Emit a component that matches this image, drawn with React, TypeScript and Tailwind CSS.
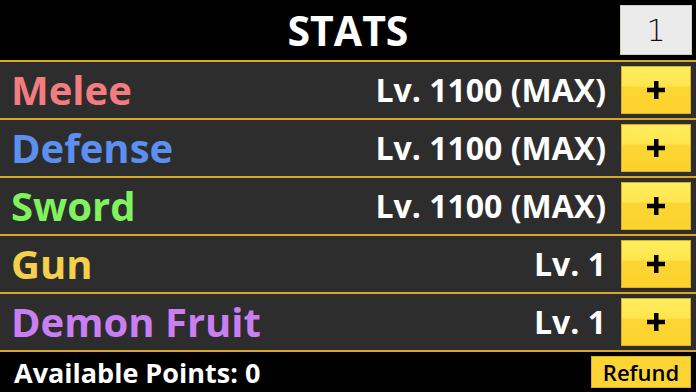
const stats = [
  { name: 'Melee', color: 'text-[#f27c80]', level: 'Lv. 1100 (MAX)' },
  { name: 'Defense', color: 'text-[#5c8ff0]', level: 'Lv. 1100 (MAX)' },
  { name: 'Sword', color: 'text-[#80f25e]', level: 'Lv. 1100 (MAX)' },
  { name: 'Gun', color: 'text-[#f4d04c]', level: 'Lv. 1' },
  { name: 'Demon Fruit', color: 'text-[#c97ff2]', level: 'Lv. 1' },
]

const PlusButton = () => (
  <button className="flex h-[48px] w-[70px] items-center justify-center border border-[#d9b020] bg-[linear-gradient(to_bottom,#ffec5e_0%,#ffe64f_40%,#fdd634_45%,#fcd22c_100%)]">
    <svg width="18" height="18" viewBox="0 0 18 18">
      <rect x="7" y="0" width="4.5" height="18" fill="#000" />
      <rect x="0" y="6.75" width="18" height="4.5" fill="#000" />
    </svg>
  </button>
)

const App: React.FC = () => (
  <div className="flex h-[392px] w-[696px] flex-col bg-black font-['Open_Sans',sans-serif]">
    <div className="grid h-[60px] grid-cols-[1fr_auto_1fr] items-center">
      <div />
      <h1 className="text-[41px] font-bold leading-none text-white">STATS</h1>
      <div className="flex justify-end pr-[4px]">
        <div className="flex h-[50px] w-[72px] items-center justify-center border border-[#d8cfae] bg-[#ebebeb] font-['DejaVu_Sans',sans-serif] text-[30px] font-light text-[#111]">
          1
        </div>
      </div>
    </div>
    {stats.map((s) => (
      <div
        key={s.name}
        className="flex h-[58px] items-center border-t-2 border-[#d9a62a] bg-[#2d2d2d] pl-[11px] pr-[5px]"
      >
        <span className={`text-[40px] font-bold leading-none ${s.color}`}>
          {s.name}
        </span>
        <span className="ml-auto mr-[15px] text-[32px] font-bold leading-none text-white">
          {s.level}
        </span>
        <PlusButton />
      </div>
    ))}
    <div className="flex flex-1 items-center border-t-2 border-[#d9a62a] pl-[14px] pr-[5px]">
      <span className="text-[27px] font-bold leading-none text-white">
        Available Points: 0
      </span>
      <button className="ml-auto h-[32px] w-[100px] border border-[#d9b020] bg-[#fcd535] text-[22px] font-semibold leading-none text-black">
        Refund
      </button>
    </div>
  </div>
)

export default App
